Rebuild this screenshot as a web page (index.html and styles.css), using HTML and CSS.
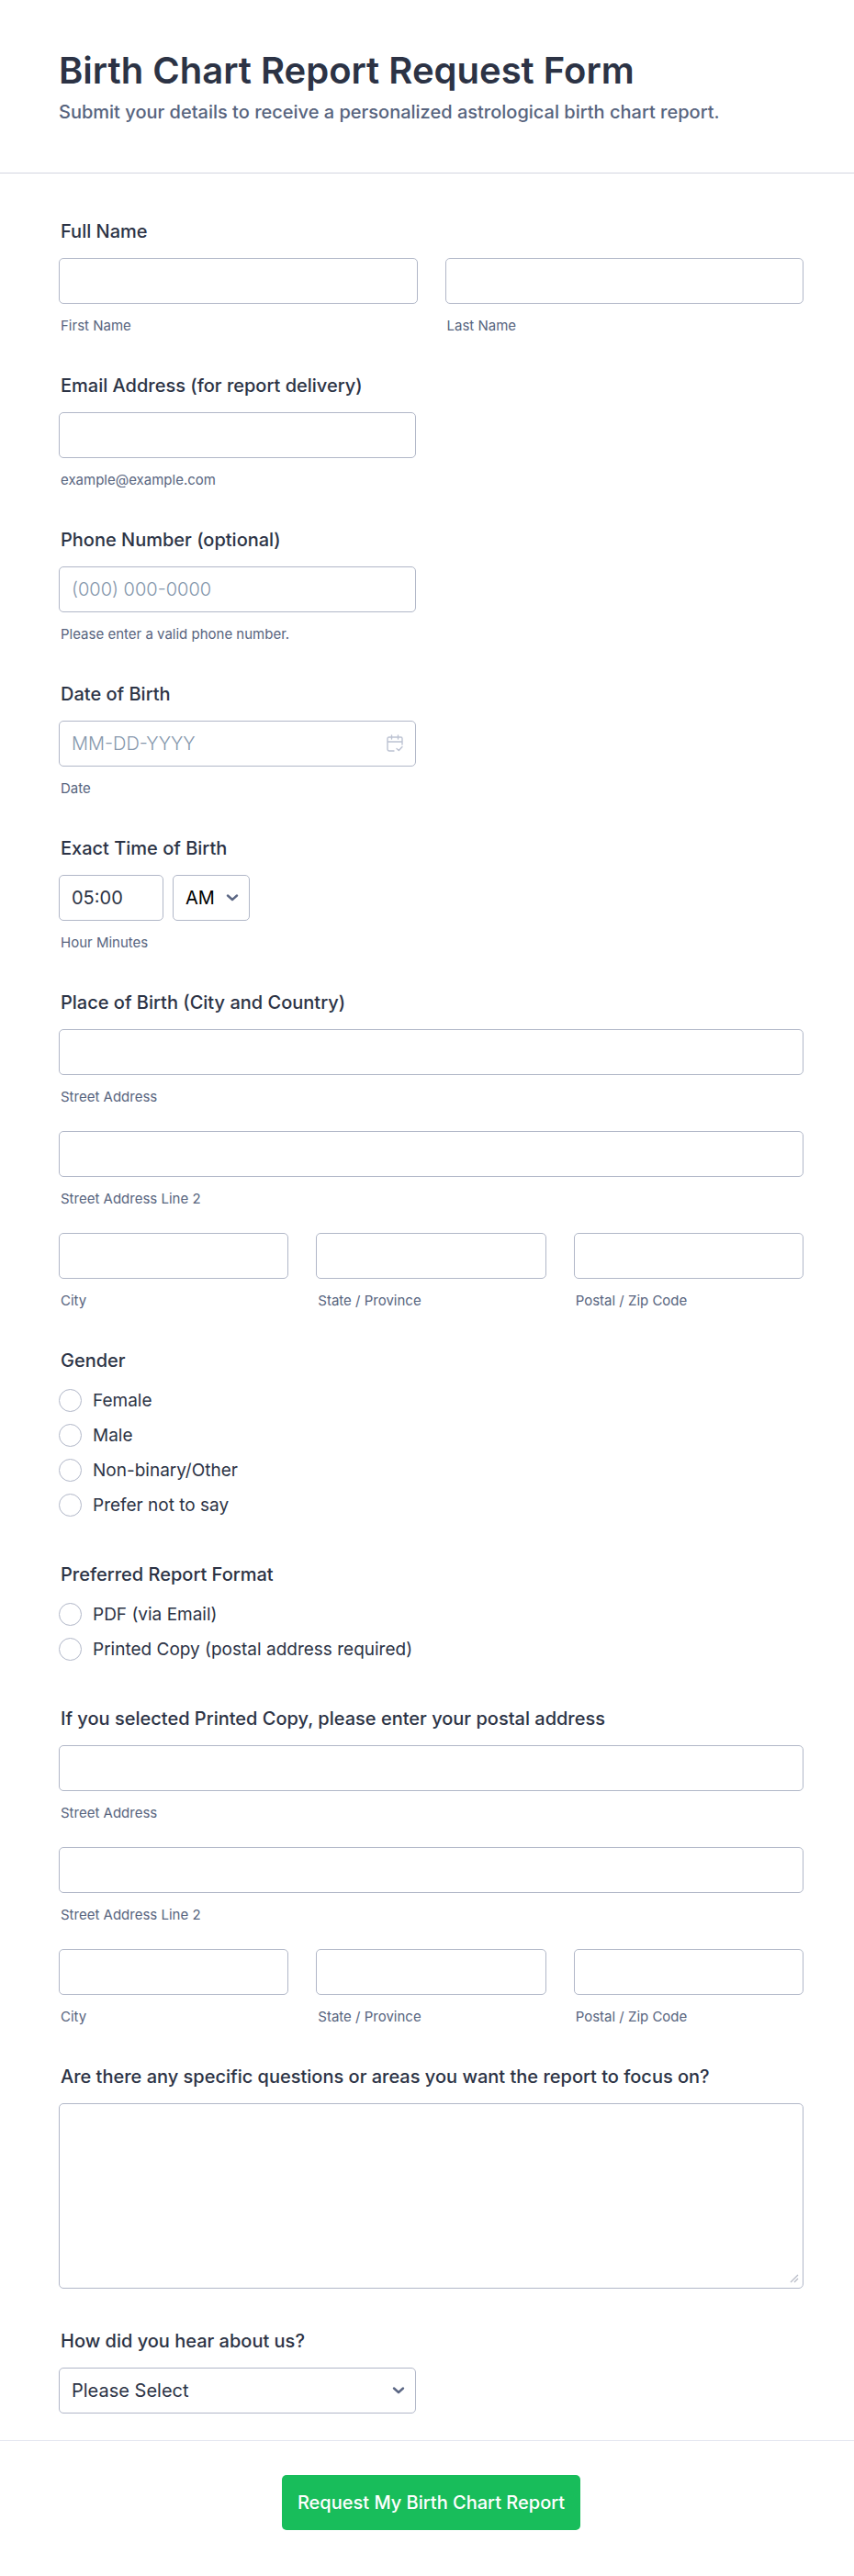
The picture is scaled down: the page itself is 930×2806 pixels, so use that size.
FILE: index.html
```
<!DOCTYPE html>
<html lang="en">
<head>
    <meta charset="UTF-8">
    <meta name="viewport" content="width=device-width, initial-scale=1.0">
    <title>Birth Chart Report Request Form</title>
    <link rel="stylesheet" href="styles.css">
</head>
<body>

<form id="requestForm" class="form">
    <header class="form-header">
        <h1>Birth Chart Report Request Form</h1>
        <p>Submit your details to receive a personalized astrological birth chart report.</p>
    </header>

    <div class="form-body">
        <!-- Full Name -->
        <fieldset class="field">
            <legend class="title">Full Name</legend>
            <div class="row two">
                <div>
                    <input type="text" id="firstName" name="firstName" class="control">
                    <label for="firstName" class="hint">First Name</label>
                </div>
                <div>
                    <input type="text" id="lastName" name="lastName" class="control">
                    <label for="lastName" class="hint">Last Name</label>
                </div>
            </div>
        </fieldset>

        <!-- Email -->
        <div class="field">
            <label for="email" class="title">Email Address (for report delivery)</label>
            <input type="email" id="email" name="email" class="control half">
            <label for="email" class="hint">example@example.com</label>
        </div>

        <!-- Phone -->
        <div class="field">
            <label for="phone" class="title">Phone Number (optional)</label>
            <input type="tel" id="phone" name="phone" class="control half" placeholder="(000) 000-0000">
            <label for="phone" class="hint">Please enter a valid phone number.</label>
        </div>

        <!-- Date of Birth -->
        <div class="field">
            <label for="birthDate" class="title">Date of Birth</label>
            <div class="icon-box half">
                <input type="text" id="birthDate" name="birthDate" class="control" placeholder="MM-DD-YYYY">
                <svg class="calendar" viewBox="0 0 18 19" fill="none" stroke="#bcc2d2" stroke-width="1.4" stroke-linecap="round" stroke-linejoin="round" aria-hidden="true">
                    <path d="M8 18H3a2 2 0 0 1-2-2V4.500a1.500 1.500 0 0 1 1.500-1.500h13a1.500 1.500 0 0 1 1.500 1.500V11M1 8h16M5.500 1v4M12.500 1v4M11 15.500l2.300 2L17 13.500"/>
                </svg>
            </div>
            <label for="birthDate" class="hint">Date</label>
        </div>

        <!-- Time of Birth -->
        <fieldset class="field">
            <legend class="title">Exact Time of Birth</legend>
            <div class="time">
                <input type="text" id="birthTime" name="birthTime" class="control" value="05:00">
                <div class="icon-box">
                    <select id="ampm" name="ampm" class="control ampm" aria-label="AM or PM">
                        <option>AM</option>
                        <option>PM</option>
                    </select>
                    <svg class="chevron" viewBox="0 0 14 10" fill="none" stroke="#5c6784" stroke-width="2.4" stroke-linecap="round" stroke-linejoin="round" aria-hidden="true">
                        <path d="M2 2.500l5 4.500 5-4.500"/>
                    </svg>
                </div>
            </div>
            <label for="birthTime" class="hint">Hour Minutes</label>
        </fieldset>

        <!-- Place of Birth -->
        <fieldset class="field">
            <legend class="title">Place of Birth (City and Country)</legend>
            <div class="address">
                <div>
                    <input type="text" id="birthStreet" name="birthStreet" class="control">
                    <label for="birthStreet" class="hint">Street Address</label>
                </div>
                <div>
                    <input type="text" id="birthStreet2" name="birthStreet2" class="control">
                    <label for="birthStreet2" class="hint">Street Address Line 2</label>
                </div>
                <div class="row three">
                    <div>
                        <input type="text" id="birthCity" name="birthCity" class="control">
                        <label for="birthCity" class="hint">City</label>
                    </div>
                    <div>
                        <input type="text" id="birthState" name="birthState" class="control">
                        <label for="birthState" class="hint">State / Province</label>
                    </div>
                    <div>
                        <input type="text" id="birthZip" name="birthZip" class="control">
                        <label for="birthZip" class="hint">Postal / Zip Code</label>
                    </div>
                </div>
            </div>
        </fieldset>

        <!-- Gender -->
        <fieldset class="field">
            <legend class="title">Gender</legend>
            <div class="options">
                <label><input type="radio" name="gender" value="female">Female</label>
                <label><input type="radio" name="gender" value="male">Male</label>
                <label><input type="radio" name="gender" value="other">Non-binary/Other</label>
                <label><input type="radio" name="gender" value="none">Prefer not to say</label>
            </div>
        </fieldset>

        <!-- Report Format -->
        <fieldset class="field">
            <legend class="title">Preferred Report Format</legend>
            <div class="options">
                <label><input type="radio" name="format" value="pdf">PDF (via Email)</label>
                <label><input type="radio" name="format" value="printed">Printed Copy (postal address required)</label>
            </div>
        </fieldset>

        <!-- Postal Address -->
        <fieldset class="field">
            <legend class="title">If you selected Printed Copy, please enter your postal address</legend>
            <div class="address">
                <div>
                    <input type="text" id="street" name="street" class="control">
                    <label for="street" class="hint">Street Address</label>
                </div>
                <div>
                    <input type="text" id="street2" name="street2" class="control">
                    <label for="street2" class="hint">Street Address Line 2</label>
                </div>
                <div class="row three">
                    <div>
                        <input type="text" id="city" name="city" class="control">
                        <label for="city" class="hint">City</label>
                    </div>
                    <div>
                        <input type="text" id="state" name="state" class="control">
                        <label for="state" class="hint">State / Province</label>
                    </div>
                    <div>
                        <input type="text" id="zip" name="zip" class="control">
                        <label for="zip" class="hint">Postal / Zip Code</label>
                    </div>
                </div>
            </div>
        </fieldset>

        <!-- Questions -->
        <div class="field">
            <label for="questions" class="title">Are there any specific questions or areas you want the report to focus on?</label>
            <div class="icon-box">
                <textarea id="questions" name="questions" class="control"></textarea>
                <svg class="grip" viewBox="0 0 10 10" fill="none" stroke="#b9bdc8" stroke-width="1.3" aria-hidden="true">
                    <path d="M1 9l8-8M5 9l4-4"/>
                </svg>
            </div>
        </div>

        <!-- Referral -->
        <div class="field">
            <label for="source" class="title">How did you hear about us?</label>
            <div class="icon-box half">
                <select id="source" name="source" class="control">
                    <option>Please Select</option>
                    <option>Search Engine</option>
                    <option>Social Media</option>
                    <option>Friend</option>
                </select>
                <svg class="chevron" viewBox="0 0 14 10" fill="none" stroke="#5c6784" stroke-width="2.4" stroke-linecap="round" stroke-linejoin="round" aria-hidden="true">
                    <path d="M2 2.500l5 4.500 5-4.500"/>
                </svg>
            </div>
        </div>
    </div>

    <div class="form-footer">
        <button type="submit">Request My Birth Chart Report</button>
    </div>
</form>

</body>
</html>
```
FILE: styles.css
```
* {
    box-sizing: border-box;
}
body {
    font-family: Inter, "Liberation Sans", sans-serif;
    background-color: #ffffff;
    color: #2c3345;
    margin: 0;
}
.form-header {
    padding: 52px 55px 54px 64px;
    border-bottom: 1px solid #d3d5e0;
}
h1 {
    margin: 0;
    font-size: 40px;
    font-weight: 600;
    line-height: 50px;
}
.form-header p {
    margin: 8px 0 0;
    font-size: 20px;
    font-weight: 500;
    line-height: 24px;
    color: #57647e;
}
.form-body {
    display: flex;
    flex-direction: column;
    gap: 44px;
    padding: 51px 55px 29px 64px;
}
.field {
    border: none;
    margin: 0;
    padding: 0;
    min-width: 0;
}
.title {
    display: block;
    padding: 0 2px;
    margin-bottom: 17px;
    font-size: 20px;
    font-weight: 500;
    line-height: 24px;
}
.hint {
    display: block;
    padding: 0 2px;
    margin-top: 15px;
    font-size: 15px;
    line-height: 18px;
    color: #57647e;
}
.control {
    display: block;
    width: 100%;
    height: 50px;
    margin: 0;
    padding: 0 13px;
    font-family: inherit;
    font-size: 20px;
    font-weight: 400;
    color: #2c3345;
    background-color: #ffffff;
    border: 1px solid #b1b7c8;
    border-radius: 5px;
    appearance: none;
}
.control::placeholder {
    color: #8496ab;
    font-weight: 300;
    opacity: 1;
}
.control:focus {
    outline: 2px solid #a8c4f0;
}
.half {
    width: 48%;
}
textarea.control {
    height: 202px;
    padding: 12px;
    margin-bottom: 1px;
    resize: vertical;
}
textarea.control::-webkit-resizer {
    background-color: transparent;
}
.row {
    display: grid;
    gap: 30px;
}
.two {
    grid-template-columns: repeat(2, 1fr);
}
.three {
    grid-template-columns: repeat(3, 1fr);
}
.address {
    display: grid;
    gap: 28px;
}
.time {
    display: grid;
    grid-template-columns: 114px 84px;
    gap: 10px;
}
.icon-box {
    position: relative;
}
.ampm {
    color: #000000;
}
.chevron {
    position: absolute;
    right: 12px;
    top: 20px;
    width: 14px;
    height: 10px;
    pointer-events: none;
}
.calendar {
    position: absolute;
    right: 14px;
    top: 15px;
    width: 18px;
    height: 19px;
    pointer-events: none;
}
.grip {
    position: absolute;
    right: 5px;
    bottom: 6px;
    width: 10px;
    height: 10px;
    pointer-events: none;
}
.options {
    display: flex;
    flex-direction: column;
    align-items: flex-start;
    gap: 13px;
    padding: 2px 0 7px;
}
.options label {
    display: flex;
    align-items: center;
    gap: 12px;
    font-size: 19px;
    line-height: 25px;
}
.options input {
    appearance: none;
    width: 25px;
    height: 25px;
    margin: 0;
    background-color: #ffffff;
    border: 1px solid #b1b7c8;
    border-radius: 50%;
}
.options input:checked {
    border: 8px solid #18bd5b;
}
.form-footer {
    display: flex;
    justify-content: center;
    padding: 37px 55px 49px 64px;
    border-top: 1px solid #e3e5f0;
}
button {
    height: 60px;
    padding: 0 17px;
    font-family: inherit;
    font-size: 20px;
    font-weight: 500;
    color: #ffffff;
    background-color: #18bd5b;
    border: none;
    border-radius: 5px;
    cursor: pointer;
}
button:hover {
    background-color: #16aa52;
}
```
